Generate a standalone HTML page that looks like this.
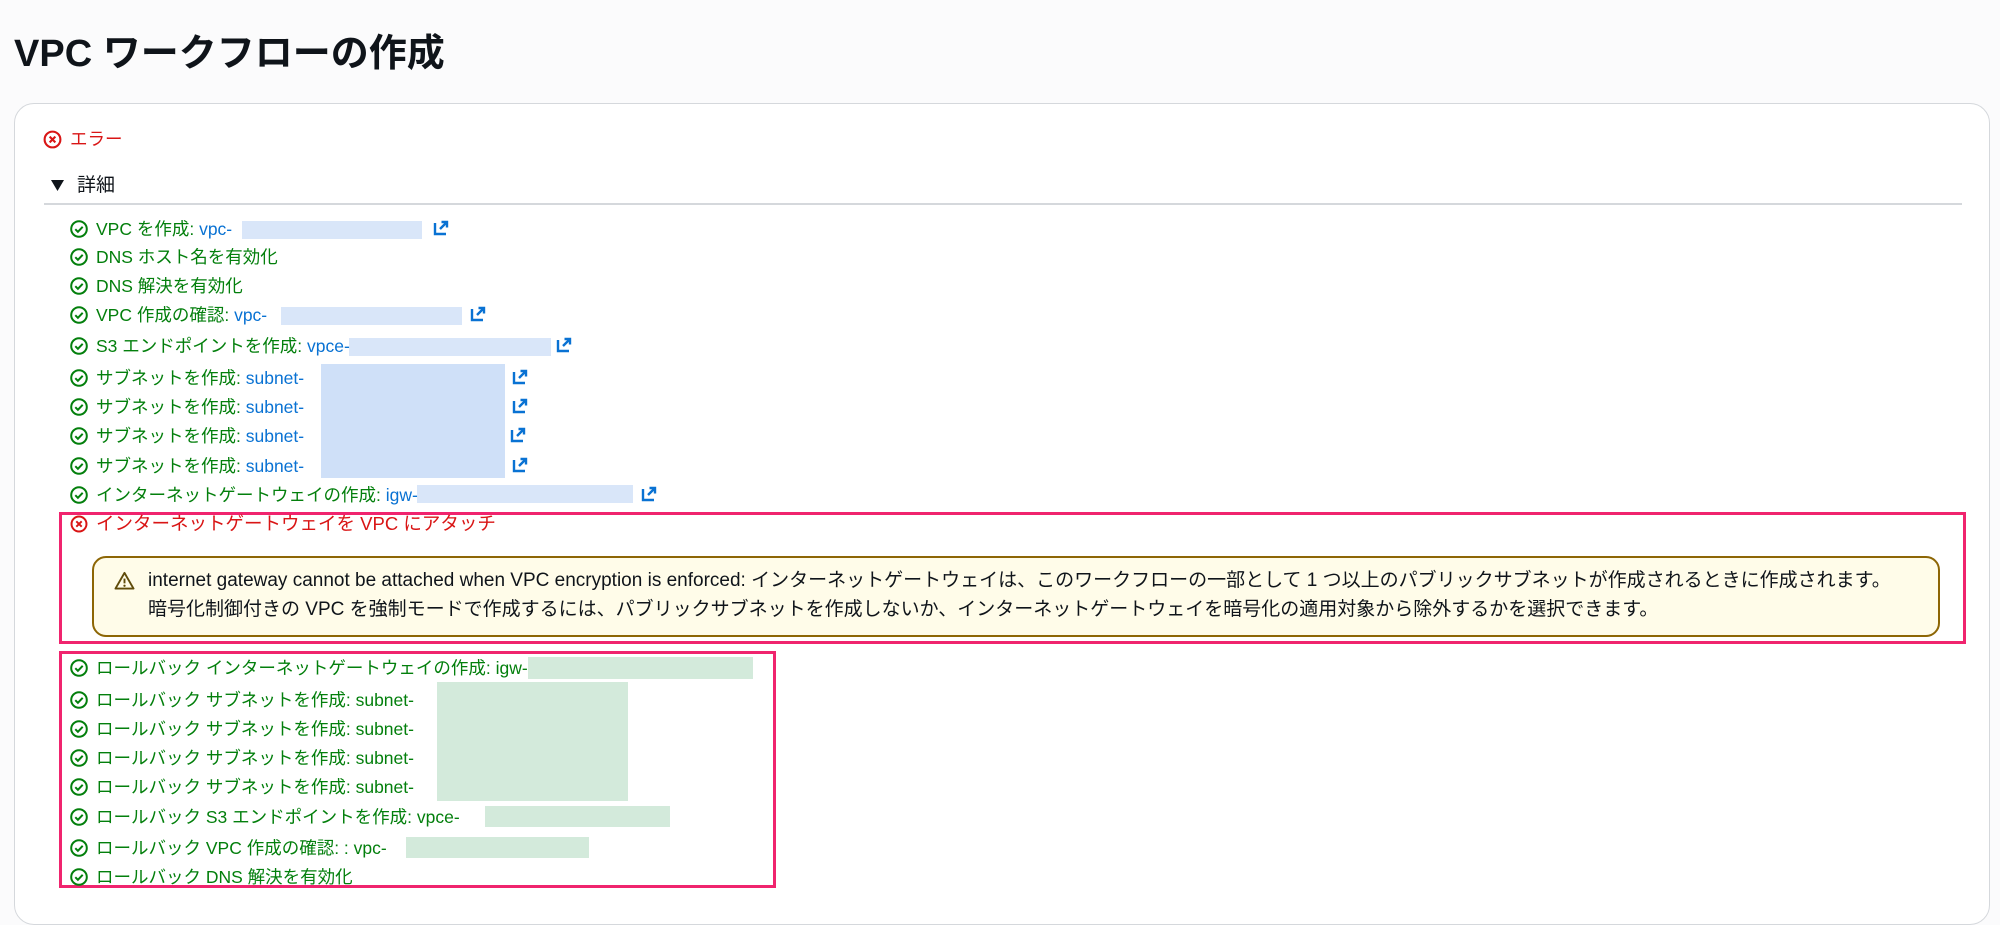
<!DOCTYPE html>
<html><head><meta charset="utf-8"><style>
body{margin:0;width:2000px;height:891px;background:#fbfbfc;font-family:"Liberation Sans","Noto Sans CJK JP",sans-serif;position:relative;overflow:hidden}
.a{position:absolute;white-space:nowrap}
h1{position:absolute;left:14px;top:22px;margin:0;font-size:38px;font-weight:bold;color:#0f141a;font-family:"Liberation Sans","Noto Sans CJK JP",sans-serif}
.card{position:absolute;left:14px;top:103px;width:1974px;height:820px;background:#fff;border:1.5px solid #d5d8dc;border-radius:20px}
.row{position:absolute;left:70px;height:24px;line-height:24px;font-size:17.5px;color:#037f0c;white-space:nowrap}
.row svg.i{position:absolute;left:0;top:3px}
.row span.t{position:absolute;left:26px;top:0}
.lk{color:#0972d3}
.blb{position:absolute;background:#cfe0f8}
.blg{position:absolute;background:#d3eadb}
.red{position:absolute;border:3px solid #f0246e;box-sizing:border-box}
</style></head><body>
<h1>VPC ワークフローの作成</h1>
<div class="card"></div>

<svg class="a" style="left:43px;top:130px" width="19" height="19" viewBox="0 0 20 20"><circle cx="10" cy="10" r="8.3" fill="none" stroke="#d91515" stroke-width="2.2"/><path d="M7 7l6 6M13 7l-6 6" stroke="#d91515" stroke-width="2.2"/></svg>
<div class="a" style="left:70px;top:127px;font-size:17.5px;color:#d91515;line-height:24px">エラー</div>

<svg class="a" style="left:51px;top:180px" width="13" height="11"><path d="M0 0h13L6.5 11z" fill="#0f141a"/></svg>
<div class="a" style="left:77px;top:172px;font-size:19px;color:#0f141a;line-height:28px">詳細</div>
<div class="a" style="left:44px;top:203px;width:1918px;height:2px;background:#d5d8dc"></div>

<!-- blurs -->
<div class="blb" style="left:242px;top:221px;width:180px;height:18px;opacity:.8"></div>
<div class="blb" style="left:281px;top:307px;width:181px;height:18px;opacity:.8"></div>
<div class="blb" style="left:349px;top:338px;width:202px;height:18px;opacity:.8"></div>
<div class="blb" style="left:321px;top:364px;width:184px;height:114px"></div>
<div class="blb" style="left:417px;top:485px;width:216px;height:18px;opacity:.8"></div>
<div class="blg" style="left:528px;top:657px;width:225px;height:22px"></div>
<div class="blg" style="left:437px;top:682px;width:191px;height:119px"></div>
<div class="blg" style="left:485px;top:806px;width:185px;height:21px"></div>
<div class="blg" style="left:406px;top:837px;width:183px;height:21px"></div>

<svg width="0" height="0" style="position:absolute"><defs>
<g id="ck"><circle cx="9" cy="9" r="7.8" fill="none" stroke="#037f0c" stroke-width="2"/><path d="M5.3 9.2l2.6 2.6 4.8-5" fill="none" stroke="#037f0c" stroke-width="2"/></g>
<g id="ex"><path d="M2 3v11h11" fill="none" stroke="#0972d3" stroke-width="2.4"/><path d="M7 9l7-7M8.5 2H14v5.5" fill="none" stroke="#0972d3" stroke-width="2.4"/></g>
</defs></svg>

<div class="row" style="top:217px"><svg class="i" width="18" height="18"><use href="#ck"/></svg><span class="t">VPC を作成: <span class="lk">vpc-</span></span></div>
<svg class="a" style="left:433px;top:220px" width="16" height="16"><use href="#ex"/></svg>
<div class="row" style="top:245px"><svg class="i" width="18" height="18"><use href="#ck"/></svg><span class="t">DNS ホスト名を有効化</span></div>
<div class="row" style="top:274px"><svg class="i" width="18" height="18"><use href="#ck"/></svg><span class="t">DNS 解決を有効化</span></div>
<div class="row" style="top:303px"><svg class="i" width="18" height="18"><use href="#ck"/></svg><span class="t">VPC 作成の確認: <span class="lk">vpc-</span></span></div>
<svg class="a" style="left:470px;top:306px" width="16" height="16"><use href="#ex"/></svg>
<div class="row" style="top:334px"><svg class="i" width="18" height="18"><use href="#ck"/></svg><span class="t">S3 エンドポイントを作成: <span class="lk">vpce-</span></span></div>
<svg class="a" style="left:556px;top:337px" width="16" height="16"><use href="#ex"/></svg>
<div class="row" style="top:366px"><svg class="i" width="18" height="18"><use href="#ck"/></svg><span class="t">サブネットを作成: <span class="lk">subnet-</span></span></div>
<svg class="a" style="left:512px;top:369px" width="16" height="16"><use href="#ex"/></svg>
<div class="row" style="top:395px"><svg class="i" width="18" height="18"><use href="#ck"/></svg><span class="t">サブネットを作成: <span class="lk">subnet-</span></span></div>
<svg class="a" style="left:512px;top:398px" width="16" height="16"><use href="#ex"/></svg>
<div class="row" style="top:424px"><svg class="i" width="18" height="18"><use href="#ck"/></svg><span class="t">サブネットを作成: <span class="lk">subnet-</span></span></div>
<svg class="a" style="left:510px;top:427px" width="16" height="16"><use href="#ex"/></svg>
<div class="row" style="top:454px"><svg class="i" width="18" height="18"><use href="#ck"/></svg><span class="t">サブネットを作成: <span class="lk">subnet-</span></span></div>
<svg class="a" style="left:512px;top:457px" width="16" height="16"><use href="#ex"/></svg>
<div class="row" style="top:483px"><svg class="i" width="18" height="18"><use href="#ck"/></svg><span class="t">インターネットゲートウェイの作成: <span class="lk">igw-</span></span></div>
<svg class="a" style="left:641px;top:486px" width="16" height="16"><use href="#ex"/></svg>

<div class="red" style="left:59px;top:512px;width:1907px;height:132px"></div>
<div class="row" style="top:512px;color:#d91515;font-size:18.5px"><svg class="i" width="18" height="18" viewBox="0 0 20 20"><circle cx="10" cy="10" r="8.3" fill="none" stroke="#d91515" stroke-width="2.2"/><path d="M7 7l6 6M13 7l-6 6" stroke="#d91515" stroke-width="2.2"/></svg><span class="t">インターネットゲートウェイを VPC にアタッチ</span></div>

<div class="a" style="left:92px;top:556px;width:1848px;height:81px;box-sizing:border-box;border:2px solid #8d6605;border-radius:14px;background:#fffce9"></div>
<svg class="a" style="left:114px;top:571px" width="21" height="19" viewBox="0 0 22 20"><path d="M11 2L20.5 18.5H1.5z" fill="none" stroke="#5f4b0a" stroke-width="2" stroke-linejoin="round"/><path d="M11 8v5" stroke="#5f4b0a" stroke-width="2"/><circle cx="11" cy="15.5" r="1.2" fill="#5f4b0a"/></svg>
<div class="a" style="left:148px;top:566px;font-size:19px;line-height:29px;color:#0f141a">internet gateway cannot be attached when VPC encryption is enforced: インターネットゲートウェイは、このワークフローの一部として 1 つ以上のパブリックサブネットが作成されるときに作成されます。<br>暗号化制御付きの VPC を強制モードで作成するには、パブリックサブネットを作成しないか、インターネットゲートウェイを暗号化の適用対象から除外するかを選択できます。</div>

<div class="red" style="left:59px;top:651px;width:717px;height:237px"></div>
<div class="row" style="top:656px"><svg class="i" width="18" height="18"><use href="#ck"/></svg><span class="t">ロールバック インターネットゲートウェイの作成: igw-</span></div>
<div class="row" style="top:688px"><svg class="i" width="18" height="18"><use href="#ck"/></svg><span class="t">ロールバック サブネットを作成: subnet-</span></div>
<div class="row" style="top:717px"><svg class="i" width="18" height="18"><use href="#ck"/></svg><span class="t">ロールバック サブネットを作成: subnet-</span></div>
<div class="row" style="top:746px"><svg class="i" width="18" height="18"><use href="#ck"/></svg><span class="t">ロールバック サブネットを作成: subnet-</span></div>
<div class="row" style="top:775px"><svg class="i" width="18" height="18"><use href="#ck"/></svg><span class="t">ロールバック サブネットを作成: subnet-</span></div>
<div class="row" style="top:805px"><svg class="i" width="18" height="18"><use href="#ck"/></svg><span class="t">ロールバック S3 エンドポイントを作成: vpce-</span></div>
<div class="row" style="top:836px"><svg class="i" width="18" height="18"><use href="#ck"/></svg><span class="t">ロールバック VPC 作成の確認: : vpc-</span></div>
<div class="row" style="top:865px"><svg class="i" width="18" height="18"><use href="#ck"/></svg><span class="t">ロールバック DNS 解決を有効化</span></div>
</body></html>
